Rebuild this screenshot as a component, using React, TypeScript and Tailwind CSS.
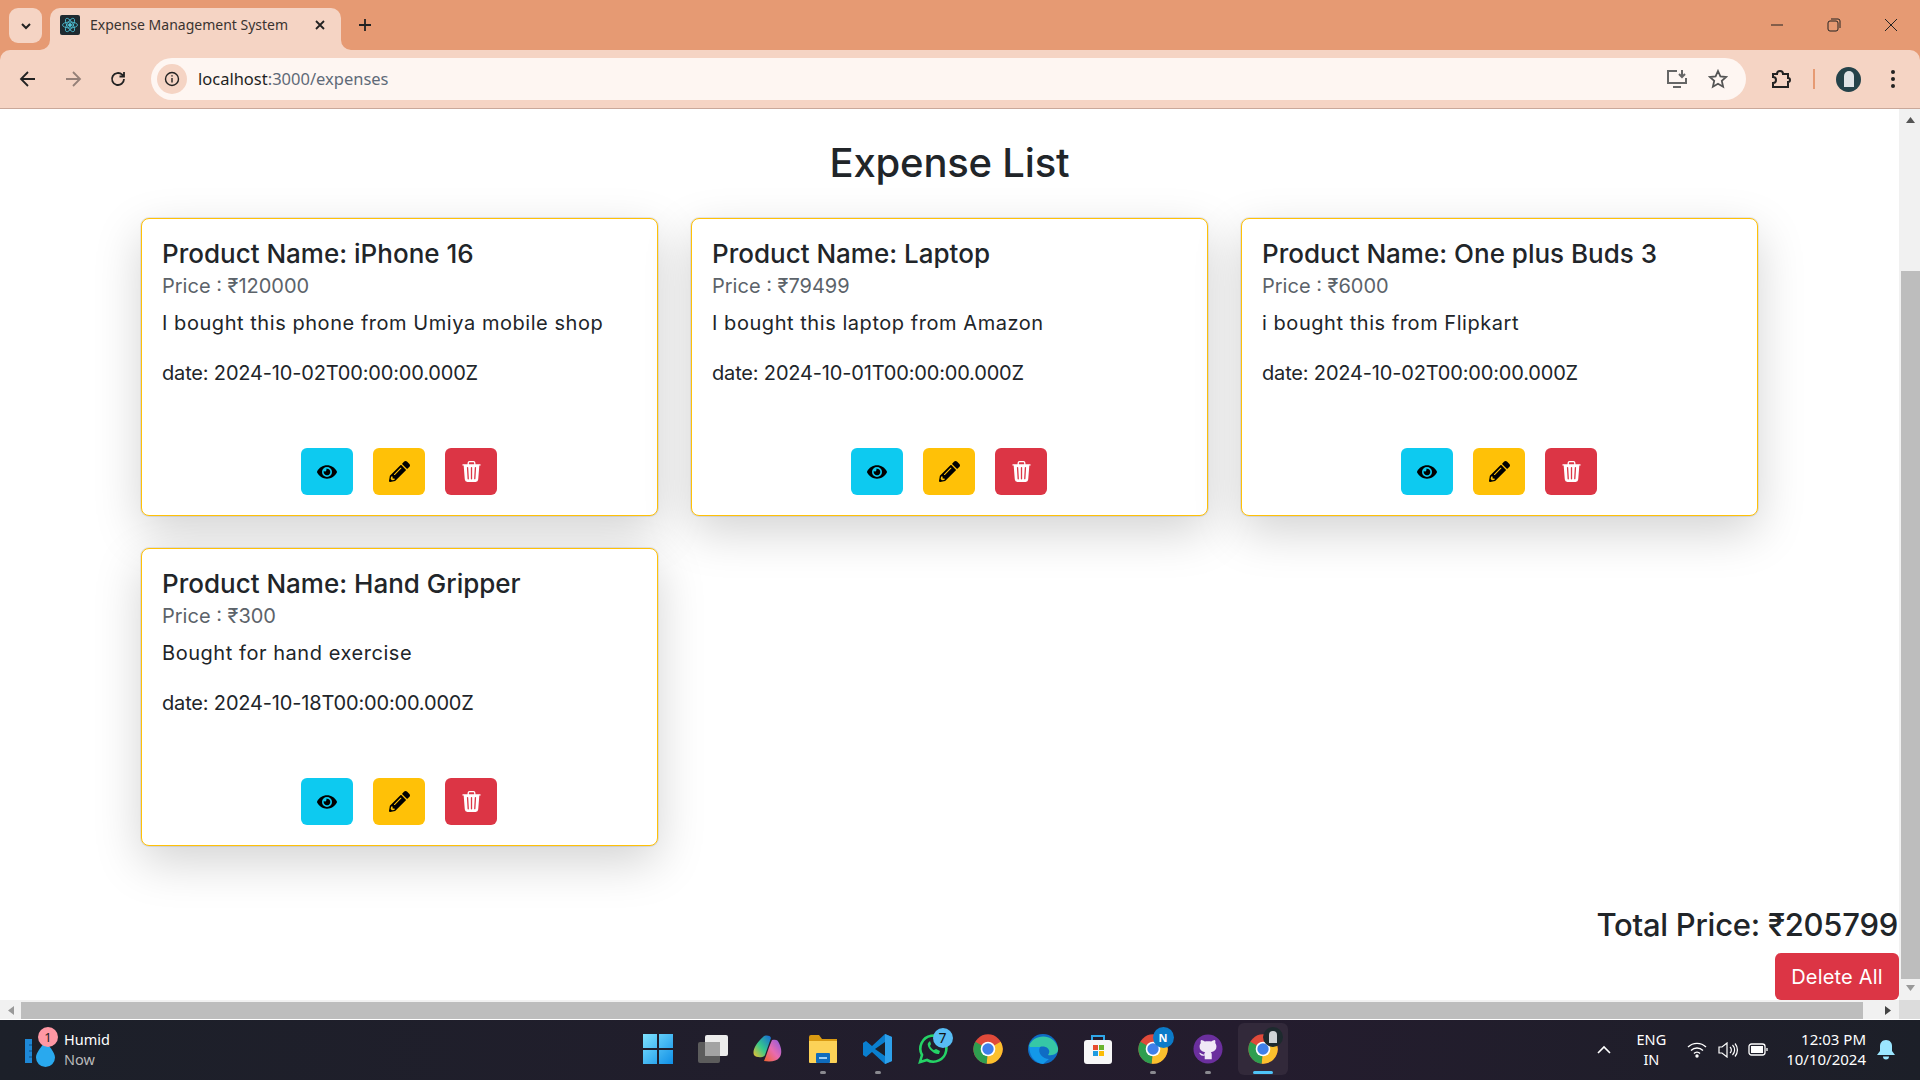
import React from "react";
import { FaEye, FaPencilAlt } from "react-icons/fa";
import { BsTrash3Fill } from "react-icons/bs";

const expenses = [
  { name: "iPhone 16", price: "120000", desc: "I bought this phone from Umiya mobile shop", date: "2024-10-02T00:00:00.000Z" },
  { name: "Laptop", price: "79499", desc: "I bought this laptop from Amazon", date: "2024-10-01T00:00:00.000Z" },
  { name: "One plus Buds 3", price: "6000", desc: "i bought this from Flipkart", date: "2024-10-02T00:00:00.000Z" },
  { name: "Hand Gripper", price: "300", desc: "Bought for hand exercise", date: "2024-10-18T00:00:00.000Z" },
];

function Card({ e }: { e: (typeof expenses)[number] }) {
  return (
    <div className="w-[517px] h-[298px] bg-white border border-[#ffc107] rounded-[8px] shadow-[0_0_0_1px_rgba(0,0,0,0.08),0_16px_48px_rgba(0,0,0,0.175)] px-5 pt-[17px] flex flex-col">
      <div className="text-[26px] leading-[36px] font-medium text-[#212529] tracking-[0px]">Product Name: {e.name}</div>
      <div className="text-[20px] leading-[30px] text-[#5c636a] -mt-[1px] tracking-[0px]">Price : ₹{e.price}</div>
      <div className="text-[20px] leading-[30px] text-[#212529] mt-[7px] tracking-[0.55px]">{e.desc}</div>
      <div className="text-[20px] leading-[30px] text-[#212529] mt-5 tracking-[-0.17px]">date: {e.date}</div>
      <div className="flex justify-center gap-5 mt-auto mb-5 -ml-[1px]">
        <button className="w-[52px] h-[47px] rounded-[6px] bg-[#0dcaf0] flex items-center justify-center text-black"><FaEye size={20} /></button>
        <button className="w-[52px] h-[47px] rounded-[6px] bg-[#ffc107] flex items-center justify-center text-black"><FaPencilAlt size={21} /></button>
        <button className="w-[52px] h-[47px] rounded-[6px] bg-[#dc3545] flex items-center justify-center text-white"><BsTrash3Fill size={21} /></button>
      </div>
    </div>
  );
}

function Chrome({ size = 32 }: { size?: number }) {
  return (
    <svg width={size} height={size} viewBox="0 0 48 48">
      <circle cx="24" cy="24" r="22" fill="#e04a3a" />
      <path d="M24 24 L43 13 A22 22 0 0 1 22 46 Z" fill="#fbc02d" />
      <path d="M24 24 L22 46 A22 22 0 0 1 5 13 Z" fill="#2e9e4f" />
      <circle cx="24" cy="24" r="11" fill="#fff" />
      <circle cx="24" cy="24" r="8.5" fill="#3f7fea" />
    </svg>
  );
}

function TaskIcon({ children, dot, active }: { children: React.ReactNode; dot?: boolean; active?: boolean }) {
  return (
    <div className={`relative w-[50px] h-[52px] rounded-[6px] flex items-center justify-center mx-[2.5px] ${active ? "bg-[#32293a]" : ""}`}>
      {children}
      {dot && <span className="absolute bottom-[1px] left-[22px] w-[6px] h-[3px] rounded-full bg-[#8a8a90]" />}
      {active && <span className="absolute bottom-[1px] left-[15px] w-[20px] h-[3px] rounded-full bg-[#4fc3f7]" />}
    </div>
  );
}

export default function App() {
  const sans = { fontFamily: "'Segoe UI','Noto Sans','Open Sans',sans-serif" };
  return (
    <div className="w-[1920px] h-[1080px] overflow-hidden flex flex-col bg-white font-['Inter','Noto_Sans',sans-serif]">
      {/* Browser chrome */}
      <div className="bg-[#e69a73] shrink-0 font-['Noto_Sans',sans-serif]">
        <div className="h-[50px] flex items-end relative">
          <div className="w-[33px] h-[35px] ml-[9px] mb-[7px] rounded-[9px] bg-[#f5d4c4] flex items-center justify-center">
            <svg width="12" height="12" viewBox="0 0 12 12" fill="none" stroke="#222" strokeWidth="2"><path d="M2 4l4 4 4-4" /></svg>
          </div>
          <div className="relative w-[291px] h-[42px] ml-[8px] pb-[9px] bg-[#f5d4c4] rounded-t-[10px] flex items-center pl-[10px] pr-[15px] text-[14px] text-[#3a3330] whitespace-nowrap">
            <svg className="absolute -left-[10px] bottom-0" width="10" height="10" viewBox="0 0 10 10" fill="#f5d4c4"><path d="M10 0v10H0a10 10 0 0010-10z" /></svg>
            <svg className="absolute -right-[10px] bottom-0" width="10" height="10" viewBox="0 0 10 10" fill="#f5d4c4"><path d="M0 0v10h10A10 10 0 010 0z" /></svg>
            <div className="w-[20px] h-[20px] rounded-[2px] bg-[#1f2a30] flex items-center justify-center">
              <svg width="18" height="18" viewBox="-12 -12 24 24" fill="none" stroke="#4fc3d9" strokeWidth="1.1">
                <ellipse rx="10" ry="4" /><ellipse rx="10" ry="4" transform="rotate(60)" /><ellipse rx="10" ry="4" transform="rotate(120)" /><circle r="2" fill="#4fc3d9" />
              </svg>
            </div>
            <span className="ml-[10px] flex-1">Expense Management System</span>
            <svg width="12" height="12" viewBox="0 0 12 12" stroke="#222" strokeWidth="1.8"><path d="M2 2l8 8M10 2l-8 8" /></svg>
          </div>
          <div className="ml-[15px] mb-[16px] w-[18px] h-[18px] flex items-center justify-center">
            <svg width="14" height="14" viewBox="0 0 14 14" stroke="#222" strokeWidth="1.8"><path d="M7 1v12M1 7h12" /></svg>
          </div>
          <div className="ml-auto mr-[22px] mb-[18px] flex items-center gap-[43px]">
            <svg width="14" height="14" viewBox="0 0 14 14" stroke="#222" strokeWidth="1"><path d="M1 7h12" /></svg>
            <svg width="14" height="14" viewBox="0 0 14 14" fill="none" stroke="#222" strokeWidth="1"><rect x="1" y="3" width="10" height="10" rx="2" /><path d="M4 1h7a2 2 0 012 2v7" /></svg>
            <svg width="14" height="14" viewBox="0 0 14 14" stroke="#222" strokeWidth="1"><path d="M1 1l12 12M13 1L1 13" /></svg>
          </div>
        </div>

        {/* Toolbar */}
        <div className="h-[59px] bg-[#f5d4c4] rounded-t-[10px] border-b border-[#c9a89a] flex items-center">
          <div className="flex items-center gap-[25px] pl-[18px]">
            <svg width="20" height="20" viewBox="0 0 20 20" fill="none" stroke="#222" strokeWidth="1.8"><path d="M17 10H3M10 3l-7 7 7 7" /></svg>
            <svg width="20" height="20" viewBox="0 0 20 20" fill="none" stroke="#958078" strokeWidth="1.8"><path d="M3 10h14M10 3l7 7-7 7" /></svg>
            <svg width="20" height="20" viewBox="0 0 20 20" fill="none" stroke="#222" strokeWidth="1.8"><path d="M16 10a6 6 0 11-1.800-4.300L16 7.500M16 3v4.500h-4.500" /></svg>
          </div>
          <div className="ml-[23px] w-[1595px] h-[42px] rounded-full bg-[#fef6f2] flex items-center pl-[6px]">
            <div className="w-[30px] h-[30px] rounded-full bg-[#f5d4c4] flex items-center justify-center">
              <svg width="16" height="16" viewBox="0 0 16 16" fill="none" stroke="#222" strokeWidth="1.4"><circle cx="8" cy="8" r="6.500" /><path d="M8 7v4.500M8 4.200v1.400" /></svg>
            </div>
            <span className="ml-[11px] text-[16.5px] text-[#1f1f1f]">localhost<span className="text-[#5f6a78]">:3000/expenses</span></span>
            <div className="ml-auto mr-[18px] flex items-center gap-[20px]">
              <svg width="22" height="20" viewBox="0 0 22 20" fill="none" stroke="#666" strokeWidth="2"><path d="M11 2H2v12h18V9M7 18h8" /><path d="M16 1v7M13 5l3 3 3-3" /></svg>
              <svg width="20" height="20" viewBox="0 0 20 20" fill="none" stroke="#555" strokeWidth="1.800"><path d="M10 2l2.400 5.400 5.800.6-4.400 3.900 1.300 5.800L10 14.700l-5.100 3 1.300-5.800L1.800 8l5.800-.6z" /></svg>
            </div>
          </div>
          <div className="ml-[24px] flex items-center">
            <svg width="22" height="22" viewBox="0 0 22 22" fill="none" stroke="#222" strokeWidth="2"><path d="M3 6h4a3 3 0 016 0h5v4a2 2 0 010 4v5H3v-4a3 3 0 000-6z" /></svg>
            <div className="ml-[21px] w-[2px] h-[20px] bg-[#e69a73]" />
            <div className="ml-[21px] w-[25px] h-[25px] rounded-full bg-[#24424a] flex items-center justify-center">
              <div className="w-[10px] h-[16px] rounded-t-full rounded-b-[4px] bg-[#dfe3e6]" />
            </div>
            <div className="ml-[30px] flex flex-col gap-[3px]">
              <span className="w-[4px] h-[4px] rounded-full bg-[#222]" />
              <span className="w-[4px] h-[4px] rounded-full bg-[#222]" />
              <span className="w-[4px] h-[4px] rounded-full bg-[#222]" />
            </div>
          </div>
        </div>
      </div>

      {/* Viewport */}
      <div className="flex-1 flex min-h-0">
        <div className="flex-1 min-w-0 overflow-hidden">
          <h1 className="text-[40px] leading-[48px] font-medium tracking-[-0.2px] text-[#212529] text-center mt-[30px]">Expense List</h1>
          <div className="ml-[141px] mt-[31px] grid grid-cols-[517px_517px_517px] gap-x-[33px] gap-y-[32px]">
            {expenses.map((e) => <Card key={e.name} e={e} />)}
          </div>
          <div className="text-[31px] leading-[40px] font-medium tracking-[-0.25px] text-[#212529] text-right mt-[59px] pr-[1px]">Total Price: ₹205799</div>
          <div className="flex justify-end mt-[8px]">
            <button className="w-[124px] h-[47px] rounded-[6px] bg-[#dc3545] text-white text-[20px] tracking-[0.2px]">Delete All</button>
          </div>
        </div>
        <div className="w-[21px] bg-[#f1f1f1] flex flex-col items-end shrink-0">
          <div className="w-[19px] flex justify-center"><svg className="mt-[8px]" width="9" height="6" viewBox="0 0 9 6" fill="#555"><path d="M4.500 0L9 6H0z" /></svg></div>
          <div className="mt-[148px] w-[19px] flex-1 bg-[#bdbdbd]" />
          <div className="w-[19px] flex justify-center"><svg className="mt-[6px] mb-[9px]" width="9" height="6" viewBox="0 0 9 6" fill="#999"><path d="M0 0h9L4.500 6z" /></svg></div>
        </div>
      </div>

      {/* Horizontal scrollbar */}
      <div className="h-[19px] bg-[#f1f1f1] flex items-end shrink-0">
        <div className="w-[21px] h-[17px] flex items-center justify-center"><svg width="6" height="9" viewBox="0 0 6 9" fill="#999"><path d="M6 0v9L0 4.500z" /></svg></div>
        <div className="w-[1842px] h-[17px] bg-[#bdbdbd]" />
        <div className="w-[36px] h-[17px] flex items-center justify-end pr-[8px]"><svg width="6" height="9" viewBox="0 0 6 9" fill="#444"><path d="M0 0v9l6-4.500z" /></svg></div>
        <div className="flex-1 h-full bg-[#dcdcdc]" />
      </div>

      {/* Taskbar */}
      <div className="h-[61px] bg-gradient-to-r from-[#1c2029] via-[#241c2e] via-65% to-[#1c1f28] border-t border-white flex items-center relative shrink-0 text-white" style={sans}>
        <div className="relative flex items-center pl-[25px] w-[600px]">
          <svg width="7" height="24" viewBox="0 0 7 24" className="mt-[2px]"><rect width="7" height="24" fill="#1e88d6" /><path d="M4 6h3M4 12h3M4 18h3" stroke="#0b4f86" strokeWidth="1.200" /></svg>
          <svg width="19" height="28" viewBox="0 0 19 28" className="mt-[6px] ml-[4px]"><path d="M9.500 1C13 8 19 13 19 18.500A9.500 9.500 0 010 18.500C0 13 6 8 9.500 1z" fill="#29a9ee" /></svg>
          <div className="absolute left-[38px] -top-[4px] w-[20px] h-[20px] rounded-full bg-[#ff98a4] text-[#222] text-[13px] leading-[20px] text-center">1</div>
          <div className="ml-[9px] -mt-[2px] text-[14.500px] leading-[20px]">
            <div>Humid</div>
            <div className="text-[#b9b9b9]">Now</div>
          </div>
        </div>
        <div className="absolute left-[630px] top-[3px] flex items-center">
          <TaskIcon>
            <svg width="30" height="30" viewBox="0 0 30 30"><defs><linearGradient id="w" x1="0" y1="0" x2="1" y2="1"><stop offset="0" stopColor="#7fe3ff" /><stop offset="1" stopColor="#0f8fe6" /></linearGradient></defs><path fill="url(#w)" d="M0 0h14v14H0zM16 0h14v14H16zM0 16h14v14H0zM16 16h14v14H16z" /></svg>
          </TaskIcon>
          <TaskIcon>
            <svg width="30" height="30" viewBox="0 0 30 30"><rect x="0" y="8" width="22" height="21" rx="2" fill="#5c5c5c" /><rect x="7" y="1" width="23" height="21" rx="2" fill="#ececec" /><rect x="7" y="8" width="15" height="14" fill="#a3a3a3" /></svg>
          </TaskIcon>
          <TaskIcon>
            <svg width="30" height="30" viewBox="0 0 30 30">
              <defs>
                <linearGradient id="cl" x1="0" y1="1" x2="1" y2="0"><stop offset="0" stopColor="#f5c02c" /><stop offset="0.45" stopColor="#37c98a" /><stop offset="1" stopColor="#1668d8" /></linearGradient>
                <linearGradient id="cr" x1="0" y1="1" x2="1" y2="0"><stop offset="0" stopColor="#f0632e" /><stop offset="0.5" stopColor="#e86bb0" /><stop offset="1" stopColor="#8a5ae0" /></linearGradient>
              </defs>
              <path d="M10 3c2-2 7-2 8 1l-6 17c-1 3-9 3-11 0C-1 17 3 9 10 3z" fill="url(#cl)" />
              <path d="M19 6c4-1 6 0 7 3 3 6 3 12 0 15-2 3-8 4-15 3l2-5c1-3 3-9 6-16z" fill="url(#cr)" />
            </svg>
          </TaskIcon>
          <TaskIcon dot>
            <svg width="32" height="30" viewBox="0 0 32 30"><path d="M2 3q0-2 2-2h8l3 4h15v4H2z" fill="#d99a12" /><path d="M2 7h28v21a1 1 0 01-1 1H3a1 1 0 01-1-1z" fill="#fcd257" /><rect x="9" y="19" width="14" height="10" rx="1" fill="#0f6cbd" /><rect x="12" y="23" width="8" height="2" fill="#9fd0f5" /></svg>
          </TaskIcon>
          <TaskIcon dot>
            <svg width="30" height="32" viewBox="0 0 30 32"><path d="M22 1l7 3v24l-7 3-13-12-6 5-3-2V10l3-2 6 5z" fill="#0a7fcf" /><path d="M22 9L12 16l10 7z" fill="#1c2029" /><path d="M22 1l7 3v24l-7 3z" fill="#2ea0ea" /></svg>
          </TaskIcon>
          <TaskIcon>
            <div className="relative">
              <svg width="32" height="32" viewBox="0 0 32 32" fill="none"><path d="M3 29l2-7a13 13 0 115 5z" stroke="#25d366" strokeWidth="2.600" /><path d="M11 10c-2 4 6 12 11 11l1-3-4-2-2 1c-1 0-3-2-4-4l1-2-1-3z" fill="#25d366" /></svg>
              <span className="absolute -top-[5px] left-[16px] w-[20px] h-[20px] rounded-full bg-[#58bdf5] text-[#111] text-[14px] leading-[20px] text-center">7</span>
            </div>
          </TaskIcon>
          <TaskIcon><Chrome /></TaskIcon>
          <TaskIcon>
            <svg width="32" height="32" viewBox="0 0 32 32"><circle cx="16" cy="16" r="15" fill="#0f6cc4" /><path d="M2 13C5 2 26-2 31 15c1 5-4 8-10 7 4-5-2-10-8-8-5 1-8 4-11-1z" fill="#36c7a6" /><path d="M13 14c-3 6 3 12 9 12l-6 5C9 30 3 25 2 14z" fill="#1398e8" /></svg>
          </TaskIcon>
          <TaskIcon>
            <svg width="30" height="32" viewBox="0 0 30 32"><path d="M9 8V3h12v5" fill="none" stroke="#30a7e8" strokeWidth="2" /><rect x="1" y="7" width="28" height="24" rx="3" fill="#f7f7f7" /><rect x="10" y="12" width="5" height="5" fill="#e74c2e" /><rect x="16" y="12" width="5" height="5" fill="#6ab42d" /><rect x="10" y="18" width="5" height="5" fill="#1f9be0" /><rect x="16" y="18" width="5" height="5" fill="#fbbc05" /></svg>
          </TaskIcon>
          <TaskIcon dot>
            <div className="relative">
              <Chrome />
              <span className="absolute -top-[6px] left-[16px] w-[21px] h-[21px] rounded-full bg-[#0c7bc9] text-white text-[11px] font-bold leading-[21px] text-center">N</span>
            </div>
          </TaskIcon>
          <TaskIcon dot>
            <svg width="30" height="30" viewBox="0 0 32 32"><circle cx="16" cy="16" r="15.500" fill="#6b2f9e" /><path d="M12.500 27v-4c-4 1-5-1-6-3 2 0 3 2 5.500 2 0-1 .3-2 1-2.500-4-.7-6-3-6-6 0-2 .7-3 1.300-4-.3-1-.3-2.300.3-3.200 1.300 0 3 .9 4 1.800 1.500-.4 5.300-.4 6.800 0 1-.9 2.700-1.800 4-1.800.6.900.6 2.200.3 3.200.6 1 1.300 2 1.300 4 0 3-2 5.300-6 6 .7.500 1 1.500 1 2.500v5z" fill="#f0e8f6" /></svg>
          </TaskIcon>
          <TaskIcon active>
            <div className="relative">
              <Chrome />
              <span className="absolute -top-[6px] left-[16px] w-[20px] h-[20px] rounded-full bg-[#1d2a2e] flex items-center justify-center"><span className="w-[8px] h-[12px] rounded-t-full rounded-b-[3px] bg-[#cfd4d6]" /></span>
            </div>
          </TaskIcon>
        </div>
        <div className="ml-auto flex items-center pr-[25px]">
          <svg className="-mt-[1px]" width="16" height="10" viewBox="0 0 16 10" fill="none" stroke="#fff" strokeWidth="1.600"><path d="M2 8l6-6 6 6" /></svg>
          <div className="ml-[25px] -mt-[2px] text-[14.500px] leading-[20px] text-center">ENG<br />IN</div>
          <svg className="ml-[21px] -mt-[1px]" width="20" height="16" viewBox="0 0 20 16" fill="none" stroke="#fff" strokeWidth="1.400"><path d="M1 5a13 13 0 0118 0M4 8.500a8.500 8.500 0 0112 0M7 11.500a4 4 0 016 0" /><circle cx="10" cy="14" r="1" fill="#fff" /></svg>
          <svg className="ml-[11px] -mt-[1px]" width="20" height="16" viewBox="0 0 20 16" fill="none" stroke="#fff" strokeWidth="1.200"><path d="M1 5h3l5-4v14l-5-4H1zM12 5a4 4 0 010 6M14.500 3a7 7 0 010 10M17 1.500a10 10 0 010 13" /></svg>
          <svg className="ml-[10px] -mt-[1px]" width="20" height="14" viewBox="0 0 20 14" fill="none" stroke="#fff" strokeWidth="1.300"><rect x="1" y="1" width="16" height="11" rx="2.500" /><rect x="3" y="3" width="12" height="7" fill="#fff" stroke="none" /><path d="M19 5v3" /></svg>
          <div className="ml-[18px] -mt-[2px] text-[15px] leading-[20px] text-right">12:03 PM<br />10/10/2024</div>
          <svg className="ml-[11px] -mt-[1px]" width="18" height="20" viewBox="0 0 18 20" fill="#9be6ff"><path d="M9 0c4 0 6 3 6 6v5l3 4H0l3-4V6c0-3 2-6 6-6zM6 16.500h6a3 3 0 01-6 0z" /></svg>
        </div>
      </div>
    </div>
  );
}
